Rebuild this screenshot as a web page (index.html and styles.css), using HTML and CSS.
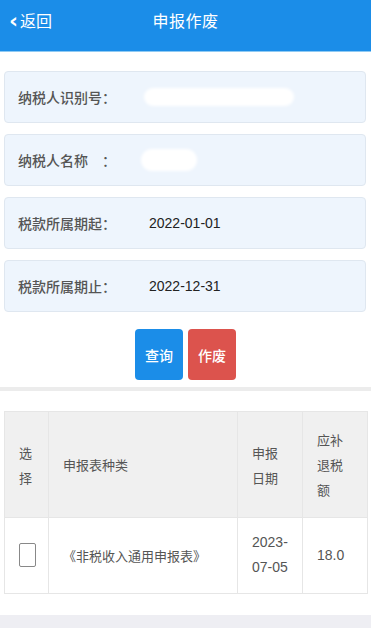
FILE: index.html
```html
<!DOCTYPE html>
<html>
<head>
  <meta charset="UTF-8" />
  <title>申报作废</title>
  <link rel="stylesheet" href="styles.css">
</head>
<body>
  <div class="topbar">
    <div class="back"><span class="arrow">‹</span>返回</div>
    <div class="title">申报作废</div>
    <div></div>
  </div>

  <div class="form">
    <div class="field">
      <div class="label">纳税人识别号：</div>
      <div class="mask mask-long"></div>
    </div>
    <div class="field">
      <div class="label">纳税人名称　：</div>
      <div class="mask mask-short"></div>
    </div>
    <div class="field">
      <div class="label">税款所属期起：</div>
      <div class="value">2022-01-01</div>
    </div>
    <div class="field">
      <div class="label">税款所属期止：</div>
      <div class="value">2022-12-31</div>
    </div>
  </div>

  <div class="actions">
    <button class="btn btn-query">查询</button>
    <button class="btn btn-void">作废</button>
  </div>

  <div class="divider"></div>

  <table class="list">
    <colgroup>
      <col style="width:44px">
      <col style="width:189px">
      <col style="width:65px">
      <col style="width:65px">
    </colgroup>
    <thead>
      <tr>
        <th>选择</th>
        <th>申报表种类</th>
        <th>申报日期</th>
        <th>应补退税额</th>
      </tr>
    </thead>
    <tbody>
      <tr>
        <td><span class="check"></span></td>
        <td>《非税收入通用申报表》</td>
        <td class="num">2023-07-05</td>
        <td class="num">18.0</td>
      </tr>
    </tbody>
  </table>

  <div class="footer"></div>
</body>
</html>
```

FILE: styles.css
```css
body {
  margin: 0;
  background: #fff;
  font-family: "Noto Sans CJK SC", "Noto Sans", sans-serif;
  color: #333;
}
.topbar {
  height: 51px;
  background: #1b8de8;
  border-bottom: 1px solid #8fcaf3;
  display: grid;
  grid-template-columns: 1fr auto 1fr;
  color: #fff;
}
.back {
  font-size: 16px;
  line-height: 40px;
  padding-left: 9px;
}
.arrow {
  font-family: "DejaVu Sans", sans-serif;
  font-size: 22px;
  font-weight: bold;
  margin-right: 2px;
  vertical-align: -1px;
}
.title {
  font-size: 16px;
  line-height: 40px;
  letter-spacing: 0.5px;
}
.form {
  padding: 19px 5px 0 4px;
}
.field {
  height: 50px;
  margin-bottom: 11px;
  background: #eef5fd;
  border: 1px solid #dfe7f0;
  border-radius: 4px;
  display: flex;
  align-items: center;
  padding-left: 13px;
}
.label {
  width: 131px;
  font-size: 14px;
  color: #555;
  font-weight: 500;
}
.value {
  font-family: "Liberation Sans", sans-serif;
  font-size: 14px;
  color: #222;
}
.mask {
  background: #fff;
  border-radius: 10px;
  filter: blur(1.5px);
}
.mask-long {
  width: 150px;
  height: 18px;
  margin-left: -5px;
}
.mask-short {
  width: 56px;
  height: 22px;
  margin-left: -8px;
  border-radius: 11px;
}
.actions {
  display: flex;
  justify-content: center;
  gap: 5px;
  padding-top: 6px;
}
.btn {
  width: 48px;
  height: 51px;
  border: none;
  border-radius: 4px;
  color: #fff;
  font-family: inherit;
  font-size: 14px;
  font-weight: 500;
  padding: 0;
}
.btn-query {
  background: #1b8de8;
}
.btn-void {
  background: #dc534d;
}
.divider {
  height: 4px;
  margin-top: 7px;
  background: #ececec;
}
.list {
  margin: 20px 0 0 4px;
  width: 363px;
  table-layout: fixed;
  border-collapse: collapse;
  font-size: 13px;
  color: #555;
}
.list th,
.list td {
  border: 1px solid #e6e6e6;
  padding: 15px 14px;
  line-height: 25px;
  text-align: left;
  font-weight: normal;
  word-break: break-all;
}
.list th {
  background: #f0f0f0;
  height: 75px;
}
.list td {
  padding-top: 12px;
  padding-bottom: 13px;
}
.list td.num {
  font-family: "Liberation Sans", sans-serif;
  font-size: 14px;
}
.check {
  display: block;
  width: 15px;
  height: 22px;
  border: 1px solid #888;
  border-radius: 2px;
  background: #fff;
}
.footer {
  margin-top: 21px;
  height: 20px;
  background: #eeeef3;
}
```
